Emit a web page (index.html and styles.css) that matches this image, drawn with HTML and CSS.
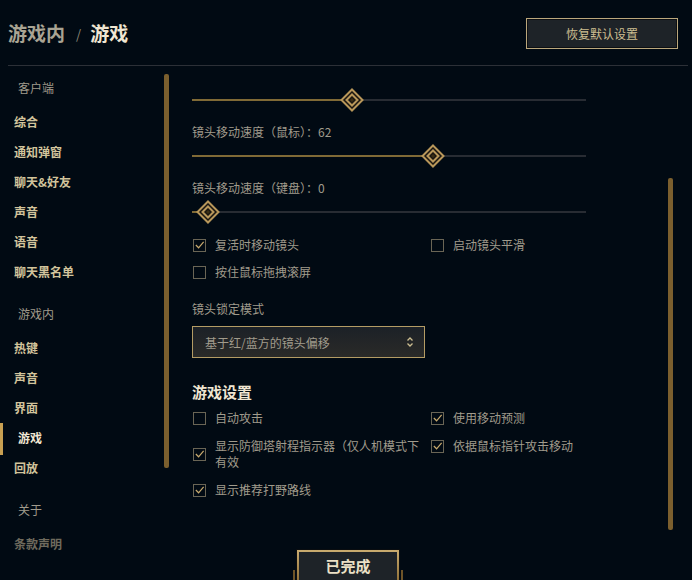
FILE: index.html
```html
<!DOCTYPE html>
<html lang="zh-CN">
  <head>
    <meta charset="UTF-8" />
    <title>设置 - 游戏</title>
    <link rel="stylesheet" href="styles.css">
  </head>
  <body>
    <header class="top">
      <h1 class="crumbs">
        <span class="crumb-parent">游戏内</span>
        <span class="crumb-sep">/</span>
        <span class="crumb-current">游戏</span>
      </h1>
      <button class="btn-reset">恢复默认设置</button>
    </header>

    <div class="layout">
      <!-- left menu -->
      <nav class="side">
        <div class="side-list">
          <div class="side-group">客户端</div>
          <a class="side-item">综合</a>
          <a class="side-item">通知弹窗</a>
          <a class="side-item">聊天&amp;好友</a>
          <a class="side-item">声音</a>
          <a class="side-item">语音</a>
          <a class="side-item">聊天黑名单</a>

          <div class="side-group">游戏内</div>
          <a class="side-item">热键</a>
          <a class="side-item">声音</a>
          <a class="side-item">界面</a>
          <a class="side-item active">游戏</a>
          <a class="side-item">回放</a>

          <div class="side-group">关于</div>
          <a class="side-item faded">条款声明</a>
        </div>
        <div class="side-scroll"></div>
      </nav>

      <!-- settings -->
      <main class="content">
        <div class="slider" style="--v:40">
          <div class="slider-fill"></div>
          <svg class="slider-thumb" viewBox="0 0 24 24">
            <path d="M12 1.5L22.5 12L12 22.5L1.5 12Z" fill="#1a1610" stroke="#b8975a" stroke-width="2" />
            <path d="M12 6.5L17.5 12L12 17.5L6.5 12Z" fill="none" stroke="#b8975a" stroke-width="2" />
            <path d="M12 10L14 12L12 14L10 12Z" fill="#3b2e14" />
          </svg>
        </div>

        <div class="field">
          <div class="field-label">镜头移动速度（鼠标）：62</div>
          <div class="slider" style="--v:62">
            <div class="slider-fill"></div>
            <svg class="slider-thumb" viewBox="0 0 24 24">
              <path d="M12 1.5L22.5 12L12 22.5L1.5 12Z" fill="#1a1610" stroke="#b8975a" stroke-width="2" />
              <path d="M12 6.5L17.5 12L12 17.5L6.5 12Z" fill="none" stroke="#b8975a" stroke-width="2" />
              <path d="M12 10L14 12L12 14L10 12Z" fill="#3b2e14" />
            </svg>
          </div>
        </div>

        <div class="field">
          <div class="field-label">镜头移动速度（键盘）：0</div>
          <div class="slider" style="--v:1">
            <div class="slider-fill"></div>
            <svg class="slider-thumb" viewBox="0 0 24 24">
              <path d="M12 1.5L22.5 12L12 22.5L1.5 12Z" fill="#1a1610" stroke="#b8975a" stroke-width="2" />
              <path d="M12 6.5L17.5 12L12 17.5L6.5 12Z" fill="none" stroke="#b8975a" stroke-width="2" />
              <path d="M12 10L14 12L12 14L10 12Z" fill="#3b2e14" />
            </svg>
          </div>
        </div>

        <div class="checks">
          <label class="check">
            <span class="box on"><svg viewBox="0 0 12 12"><path d="M2 5.5L5 8.5L10.5 2" /></svg></span>
            复活时移动镜头
          </label>
          <label class="check">
            <span class="box"></span>
            启动镜头平滑
          </label>
          <label class="check">
            <span class="box"></span>
            按住鼠标拖拽滚屏
          </label>
        </div>

        <div class="field field-select">
          <div class="field-label">镜头锁定模式</div>
          <div class="select">
            <span>基于红/蓝方的镜头偏移</span>
            <svg class="select-arrows" viewBox="0 0 8 12">
              <path d="M1.5 4.5L4 2L6.5 4.5M1.5 7.5L4 10L6.5 7.5" />
            </svg>
          </div>
        </div>

        <h2 class="group-title">游戏设置</h2>
        <div class="checks checks-game">
          <label class="check">
            <span class="box"></span>
            自动攻击
          </label>
          <label class="check">
            <span class="box on"><svg viewBox="0 0 12 12"><path d="M2 5.5L5 8.5L10.5 2" /></svg></span>
            使用移动预测
          </label>
          <label class="check">
            <span class="box on"><svg viewBox="0 0 12 12"><path d="M2 5.5L5 8.5L10.5 2" /></svg></span>
            <span>显示防御塔射程指示器（仅人机模式下有效</span>
          </label>
          <label class="check">
            <span class="box on"><svg viewBox="0 0 12 12"><path d="M2 5.5L5 8.5L10.5 2" /></svg></span>
            依据鼠标指针攻击移动
          </label>
          <label class="check">
            <span class="box on"><svg viewBox="0 0 12 12"><path d="M2 5.5L5 8.5L10.5 2" /></svg></span>
            显示推荐打野路线
          </label>
        </div>
      </main>

      <div class="content-scroll"></div>
    </div>

    <footer class="bottom">
      <button class="btn-done">已完成</button>
    </footer>
  </body>
</html>
```

FILE: styles.css
```css
/* Base */
body {
  margin: 0;
  width: 692px;
  height: 580px;
  overflow: hidden;
  background-color: #010a13;
  color: #a09b8c;
  font-family: "Noto Sans CJK SC", "Noto Sans", sans-serif;
  font-size: 12px;
}

button {
  font-family: inherit;
  cursor: pointer;
}

/* Header */
.top {
  display: flex;
  justify-content: space-between;
  align-items: center;
  height: 65px;
  margin: 0 4px 0 8px;
  padding-right: 10px;
  border-bottom: 1px solid #2c3037;
}

.crumbs {
  margin: 0;
  font-size: 19px;
  line-height: 24px;
  font-weight: bold;
  display: flex;
  align-items: center;
}

.crumb-parent {
  color: #a9a493;
}

.crumb-sep {
  margin: 2px 9px 0 11px;
  color: #8c8878;
  font-weight: normal;
  font-size: 13px;
}

.crumb-current {
  color: #f0e6d2;
}

.btn-reset {
  width: 152px;
  height: 31px;
  margin-top: 1px;
  background: #1e2328;
  border: 1px solid #bba77c;
  box-shadow: inset 0 0 0 1px #0c0f13;
  color: #cdbe91;
  font-size: 12px;
}

/* Main area */
.layout {
  display: flex;
  height: 474px;
}

.side {
  display: flex;
  width: 170px;
  flex: none;
}

.side-list {
  width: 164px;
  padding-top: 14px;
}

.side-group {
  padding-left: 18px;
  line-height: 16px;
  margin-bottom: 11px;
  color: #a09b8c;
}

.side-item + .side-group {
  margin-top: 19px;
}

.side-item {
  display: block;
  position: relative;
  height: 30px;
  line-height: 30px;
  padding-left: 14px;
  font-weight: bold;
  color: #d2c49c;
}

.side-item.active {
  padding-left: 18px;
  color: #f0e6d2;
}

.side-item.active::before {
  content: "";
  position: absolute;
  left: 0;
  top: 0;
  width: 3px;
  height: 32px;
  background: #c8a052;
}

.side-item.faded {
  color: #6f6a5d;
}

.side-scroll {
  width: 5px;
  height: 394px;
  margin-top: 8px;
  border-radius: 2px;
  background: #7b5f2e;
}

/* Settings column */
.content {
  width: 394px;
  flex: none;
  margin-left: 22px;
  padding-top: 22px;
}

.content-scroll {
  width: 5px;
  height: 352px;
  margin: 112px 19px 0 auto;
  border-radius: 2px;
  background: #7b5f2e;
}

.field {
  margin-top: 12px;
}

.field-label {
  line-height: 16px;
}

/* Slider */
.slider {
  position: relative;
  height: 24px;
  margin-top: 4px;
  background: linear-gradient(#282c33, #282c33) center / 100% 2px no-repeat;
}

.content > .slider {
  margin-top: 0;
}

.slider-fill {
  position: absolute;
  left: 0;
  top: 11px;
  height: 2px;
  width: calc((100% - 24px) * var(--v) / 100 + 12px);
  background: #806a36;
}

.slider-thumb {
  position: absolute;
  top: 0;
  left: calc((100% - 24px) * var(--v) / 100);
  width: 24px;
  height: 24px;
}

/* Checkboxes */
.checks {
  display: grid;
  grid-template-columns: 238px 1fr;
  row-gap: 11px;
  align-items: start;
  margin-top: 13px;
}

.check {
  display: flex;
  align-items: center;
  gap: 9px;
  line-height: 16px;
  color: #a09b8c;
}

.box {
  flex: none;
  width: 11px;
  height: 11px;
  margin-left: 1px;
  border: 1px solid #6a6555;
  display: flex;
}

.box svg {
  width: 11px;
  height: 11px;
}

.box svg path {
  fill: none;
  stroke: #c8aa6e;
  stroke-width: 1.3;
}

.checks-game {
  margin-top: 8px;
  row-gap: 12px;
}

/* Dropdown */
.field-select {
  margin-top: 21px;
}

.select {
  box-sizing: border-box;
  width: 233px;
  height: 32px;
  margin-top: 9px;
  padding: 0 10px 0 12px;
  display: flex;
  align-items: center;
  justify-content: space-between;
  border: 1px solid #b49c64;
  background: linear-gradient(#1c2127, #2a2a28);
  color: #a09b8c;
}

.select-arrows {
  width: 8px;
  height: 12px;
}

.select-arrows path {
  fill: none;
  stroke: #cdbe91;
  stroke-width: 1.3;
}

.group-title {
  margin: 24px 0 0;
  font-size: 15px;
  line-height: 20px;
  font-weight: bold;
  color: #f0e6d2;
}

/* Footer */
.bottom {
  display: flex;
  justify-content: center;
  padding: 10px 0 0 4px;
}

.btn-done {
  position: relative;
  width: 102px;
  height: 36px;
  padding: 0 0 5px;
  border: 2px solid;
  border-image: linear-gradient(#c8aa6e, #8a6a32) 1;
  box-shadow: 0 0 0 1px #0a0d10;
  background: #1e2328;
  color: #ebe0c6;
  font-size: 15px;
  font-weight: bold;
}

.btn-done::before,
.btn-done::after {
  content: "";
  position: absolute;
  top: 18px;
  width: 2px;
  height: 20px;
  background: #6e5428;
}

.btn-done::before {
  left: -6px;
}

.btn-done::after {
  right: -6px;
}
```
